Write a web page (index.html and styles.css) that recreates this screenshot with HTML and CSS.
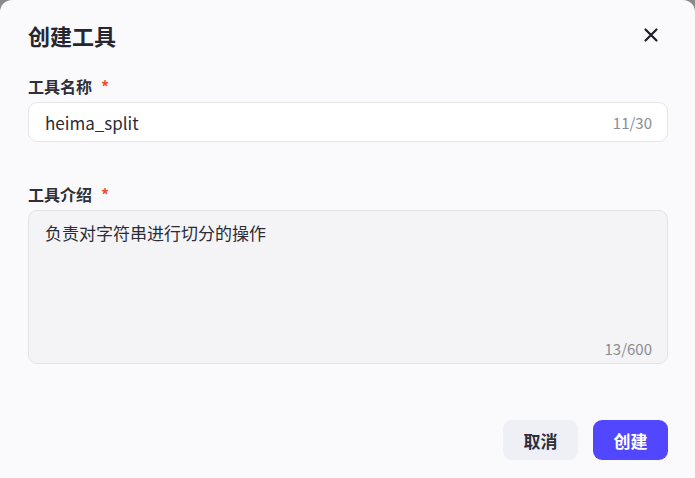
FILE: index.html
```html
<!DOCTYPE html>
<html lang="zh">
<head>
<meta charset="utf-8">
<link rel="stylesheet" href="styles.css">
</head>
<body>
<div class="dialog">
  <div class="header">
    <h1 class="title">创建工具</h1>
    <button class="close" aria-label="关闭">
      <svg width="16" height="16" viewBox="0 0 16 16"><path d="M2.5 2.5 L13.5 13.5 M13.5 2.5 L2.5 13.5" stroke="#1d1e26" stroke-width="2.2" stroke-linecap="round"/></svg>
    </button>
  </div>
  <div class="field">
    <label class="label">工具名称<span class="req">*</span></label>
    <div class="input">
      <span class="value">heima_split</span>
      <span class="count">11/30</span>
    </div>
  </div>
  <div class="field second">
    <label class="label">工具介绍<span class="req">*</span></label>
    <div class="textarea">
      <span class="value">负责对字符串进行切分的操作</span>
      <span class="count">13/600</span>
    </div>
  </div>
  <div class="footer">
    <button class="btn cancel">取消</button>
    <button class="btn primary">创建</button>
  </div>
</div>
</body>
</html>
```
FILE: styles.css
```css
html, body {
  margin: 0;
  padding: 0;
  background: #8a8a8e;
  width: 695px;
  height: 478px;
  overflow: hidden;
}
body {
  font-family: "Noto Sans CJK SC", "Noto Sans", sans-serif;
}
.dialog {
  box-sizing: border-box;
  width: 695px;
  height: 478px;
  background: #fafafc;
  border-radius: 12px 12px 0 0;
  padding: 18px 27px 0 28px;
  display: flex;
  flex-direction: column;
}
.header {
  display: flex;
  justify-content: space-between;
  align-items: center;
  height: 34px;
}
.title {
  margin: 0;
  font-size: 22px;
  font-weight: 700;
  color: #262630;
  line-height: 34px;
}
.close {
  border: none;
  background: none;
  padding: 0;
  width: 16px;
  height: 16px;
  margin-right: 9px;
  display: flex;
}
.field {
  margin-top: 23px;
  display: flex;
  flex-direction: column;
}
.field.second {
  margin-top: 41px;
}
.label {
  font-size: 16px;
  font-weight: 700;
  color: #2e2f38;
  line-height: 22px;
  margin-bottom: 5px;
}
.req {
  color: #f0502e;
  font-weight: 700;
  margin-left: 9px;
}
.input {
  box-sizing: border-box;
  height: 40px;
  background: #ffffff;
  border: 1px solid #e6e6ea;
  border-radius: 9px;
  display: flex;
  align-items: center;
  justify-content: space-between;
  padding: 0 15px 0 16px;
}
.value {
  font-size: 17px;
  color: #2b2c36;
}
.count {
  font-size: 15px;
  color: #8c8c94;
}
.textarea {
  box-sizing: border-box;
  height: 154px;
  background: #f4f4f6;
  border: 1px solid #e2e2e6;
  border-radius: 9px;
  display: flex;
  flex-direction: column;
  justify-content: space-between;
  padding: 10px 15px 4px 16px;
}
.textarea .value {
  font-size: 17px;
  line-height: 24px;
}
.textarea .count {
  align-self: flex-end;
}
.footer {
  margin-top: auto;
  margin-bottom: 18px;
  display: flex;
  justify-content: flex-end;
  gap: 15px;
}
.btn {
  width: 75px;
  height: 40px;
  border: none;
  border-radius: 9px;
  font-family: inherit;
  font-size: 17px;
  font-weight: 700;
}
.cancel {
  background: #efeff6;
  color: #2e2f38;
}
.primary {
  background: #5147ff;
  color: #ffffff;
}
```
